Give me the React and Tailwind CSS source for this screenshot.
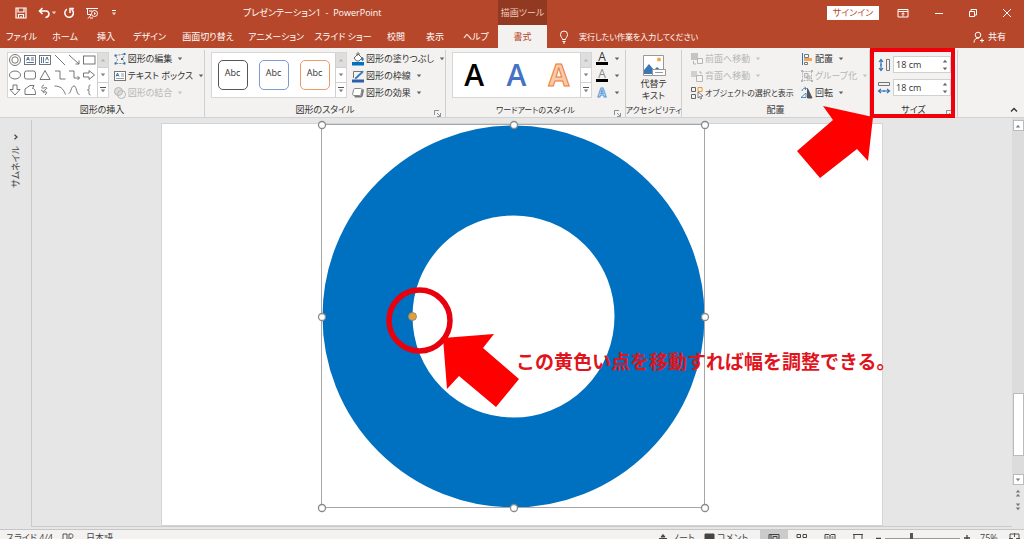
import clsx from 'clsx';

const tabs = [
  { label: 'ファイル', width: 'w-[43px]' },
  { label: 'ホーム', width: 'w-[44px]' },
  { label: '挿入', width: 'w-[38px]' },
  { label: 'デザイン', width: 'w-[49px]' },
  { label: '画面切り替え', width: 'w-[68px]' },
  { label: 'アニメーション', width: 'w-[68px]' },
  { label: 'スライド ショー', width: 'w-[66px]' },
  { label: '校閲', width: 'w-[40px]' },
  { label: '表示', width: 'w-[38px]' },
  { label: 'ヘルプ', width: 'w-[44px]' },
];

// outlines for the shape gallery, drawn on a 14x12 grid
const shapes = [
  ['リング', <><circle cx="7" cy="6" r="5.5" /><circle cx="7" cy="6" r="3.2" /></>],
  ['横書きテキスト', <><rect x="1.5" y="1.5" width="11" height="9" /><path d="M3.5 6.5 5 3l1.500 3.500M4 5.500h2M8 4h3M8 6h3M3.500 8.500h7.500" stroke="#44678f" /></>],
  ['縦書きテキスト', <><rect x="1.500" y="1.500" width="11" height="9" /><path d="M7.500 6.500 9 3l1.500 3.500M3.500 3v6M5.500 3v6M7.500 8.500h3" stroke="#44678f" /></>],
  ['直線', <path d="M2 1l10 10" />],
  ['矢印', <path d="M2 1l10 9M12 6.500v3.500H8.500" />],
  ['正方形', <rect x="1.500" y="2" width="11.500" height="8" />],
  ['楕円', <ellipse cx="7" cy="6" rx="5.500" ry="4" />],
  ['角丸四角形', <rect x="1.500" y="2" width="11" height="8" rx="2" />],
  ['三角形', <path d="M7 1.500 12 10.500H2z" />],
  ['カギ線', <path d="M2 2h5v8h5.500" />],
  ['カギ線矢印', <path d="M2 2h5v7h5.500M10.500 7l2 2-2 2" />],
  ['右矢印', <path d="M1.500 4h5.500V1.500L12.500 6 7 10.500V8H1.500z" />],
  ['下矢印', <path d="M5 1h4v4.500h3L7 11 2 5.500h3z" />],
  ['フリーフォーム', <path d="M2 10.500V5l5-3.500h4L9.500 4.500c2 0 3 1.500 3 6z" />],
  ['フリーハンド', <path d="M6 1C3 2 3 5 6 4s4 0 1 2-2 3 0 2 2 1 0 3M3 6l3 2" />],
  ['円弧', <path d="M1.500 2c6 0 9 3 11 8.500" />],
  ['曲線', <path d="M1.500 9.500C4 9.500 4 2 7 2s2 8.500 5.500 8.500" />],
  ['左中かっこ', <path d="M8.500 1C6.500 1 7 3 7 4.500S6 6 5.500 6C6 6 7 6 7 7.500s-.5 3.500 1.500 3.500" />],
];

const Caret = ({ className }) => (
  <svg viewBox="0 0 6 4" className={clsx('h-1 w-1.5 shrink-0 fill-current opacity-75', className)} aria-hidden="true">
    <path d="M.8.5h4.400L3 3.300z" />
  </svg>
);

const Svg = ({ w = 14, h = 14, className, children }) => (
  <svg
    viewBox={`0 0 ${w} ${h}`}
    width={w}
    height={h}
    fill="none"
    stroke="currentColor"
    className={clsx('shrink-0', className)}
    aria-hidden="true"
  >
    {children}
  </svg>
);

const GalleryScroll = () => (
  <div className="flex w-[11px] shrink-0 flex-col divide-y divide-[#d0d0d0] border-l border-[#d0d0d0] text-[#555]">
    <button aria-label="前の行" className="flex flex-1 items-center justify-center bg-[#dedede] text-[#aaa]">
      <Caret className="rotate-180" />
    </button>
    <button aria-label="次の行" className="flex flex-1 items-center justify-center"><Caret /></button>
    <button aria-label="その他" className="flex flex-1 flex-col items-center justify-center gap-px">
      <span className="h-px w-1.5 bg-current" />
      <Caret />
    </button>
  </div>
);

const Gallery = ({ className, children }) => (
  <div className={clsx('flex h-[46px] border border-[#d6d6d6] bg-white', className)}>
    {children}
    <GalleryScroll />
  </div>
);

const Group = ({ label, width, launcher, small, children }) => (
  <section className={clsx('relative flex shrink-0 flex-col border-r border-[#cfcfcf]', width)} aria-label={label}>
    <div className="flex h-[53px] items-start">{children}</div>
    <div className={clsx('flex h-[14px] items-center justify-center whitespace-nowrap', small && 'text-[8px]')}>
      {label}
    </div>
    {launcher && (
      <button aria-label={`${label}の詳細`} className="absolute bottom-0 right-1 text-[#777]">
        <Svg w={7} h={7}><path d="M.5 5V.5H5M3 3l3 3M6.500 3v3.500H3" strokeWidth=".8" /></Svg>
      </button>
    )}
  </section>
);

const Command = ({ icon, label, caret = true, small, disabled }) => (
  <button
    disabled={disabled}
    className={clsx(
      'flex h-[17px] items-center gap-px whitespace-nowrap',
      disabled && 'text-[#b5b5b5]',
      small && 'text-[8px]'
    )}
  >
    {icon}
    {label}
    {caret && <Caret className="ml-1" />}
  </button>
);

const EditShapeIcon = () => (
  <Svg>
    <path d="M2.500 3.500 12 2 9.500 7l2.500 4.500H2.500L4.500 8z" stroke="#888" strokeDasharray="2 1" />
    <path d="M1.500 2.500h2v2h-2zM10.500 1h2v2h-2zM1.500 10.500h2v2h-2zM10.500 10.500h2v2h-2zM8 6h2v2H8z" fill="#2f75b5" stroke="none" />
  </Svg>
);

const TextBoxIcon = () => (
  <Svg>
    <rect x="1.500" y="2.500" width="11" height="9" fill="#fff" stroke="#777" />
    <path d="M3 7.500 4.500 4 6 7.500M3.500 6.500h2" stroke="#2f75b5" />
    <path d="M8 5h3M8 7h3M3 9.500h8" stroke="#999" />
  </Svg>
);

const MergeIcon = () => (
  <Svg>
    <circle cx="5.500" cy="5.500" r="4" fill="#ddd" />
    <circle cx="8.500" cy="8.500" r="4" />
  </Svg>
);

const FillIcon = () => (
  <Svg>
    <path d="M3 6l4-4 4 4-3 3H5.500z" fill="#fff" stroke="#666" />
    <path d="M6 4V1.500c0-1 2-1 2 0V3" stroke="#666" />
    <path d="M11.500 5.500c1 1.500 1 3 0 3s-1-1.500 0-3z" fill="#2f75b5" stroke="#2f75b5" />
    <path d="M1 10h12v3.500H1z" fill="#0070c0" stroke="none" />
  </Svg>
);

const OutlineIcon = () => (
  <Svg>
    <path d="M2.500 9V2.500H11" stroke="#777" />
    <path d="M4.500 8.500 11.500 2l1 1-7 6.500-1.500.2z" fill="#2f75b5" stroke="#2f75b5" strokeWidth=".6" />
    <path d="M1 10.500h12v3H1z" fill="#2f5da8" stroke="none" />
  </Svg>
);

const EffectIcon = () => (
  <Svg>
    <path d="M4 11.500h5.500c1 0 2-1 2.300-2l1-4.500c.2-1-.3-2-1.300-2.200L10 9.500H3z" fill="#777" stroke="none" />
    <path d="M4 2.500h5.500c1 0 1.500.6 1.300 1.500L10 8c-.2.800-.8 1.500-1.800 1.500H3c-1 0-1.500-.7-1.300-1.500L2.500 4c.2-.9.700-1.500 1.500-1.500z" fill="#fff" stroke="#888" />
  </Svg>
);

const ForwardIcon = () => (
  <Svg>
    <path d="M1 1h7v7H1z" fill="#c4c4c4" stroke="none" />
    <path d="M7.500 6.500h5v5h-5z" fill="#f5f5f5" />
    <path d="M3.500 9v3H6" />
  </Svg>
);

const BackwardIcon = () => (
  <Svg>
    <path d="M1 2h6v6H1z" fill="#d0d0d0" stroke="none" />
    <path d="M6.500 6.500h6v6h-6zM9 3h2v2" fill="#f5f5f5" />
  </Svg>
);

const SelectionPaneIcon = () => (
  <Svg>
    <path d="M1.500 1.500h4v4h-4zM1.500 8.500h4v4h-4z" stroke="#666" />
    <path d="M8 1.500h4v4H8z" stroke="#e59a3c" />
    <path d="M8 6v6l1.500-1.500 1 2.500 1.200-.5-1-2.500H13z" fill="#fff" stroke="#666" strokeWidth=".8" />
  </Svg>
);

const AlignIcon = () => (
  <Svg>
    <path d="M2.500 1v12" stroke="#2f75b5" />
    <path d="M4.500 2.500h4v3h-4z" fill="#fff" stroke="#777" />
    <path d="M4 6h8v3H4z" fill="#f0a656" stroke="none" />
    <path d="M4.500 10.500h3v2h-3z" fill="#fff" stroke="#777" />
  </Svg>
);

const GroupIcon = () => (
  <Svg>
    <path d="M2.500 2.500h9v9h-9z" strokeDasharray="2 1" />
    <path d="M4.500 4.500H8v4H4.500zM7 7h3v3H7z" fill="#e4e4e4" />
    <path d="M1 1h2v2H1zM11 1h2v2h-2zM1 11h2v2H1zM11 11h2v2h-2z" fill="currentColor" stroke="none" />
  </Svg>
);

const RotateIcon = () => (
  <Svg>
    <path d="M7.500 2.500v9.500H12z" fill="#555" stroke="#555" />
    <path d="M1 11.500h5V7z" stroke="#2f75b5" strokeWidth=".8" />
    <path d="M2 5c0-2 2-3 4-2.500M4.500 1 6.500 2.500 5 4" stroke="#2f75b5" strokeWidth=".9" />
  </Svg>
);

const SizeField = ({ id, label, icon }) => (
  <div className="flex items-center gap-0.5">
    <label htmlFor={id} aria-label={label}>{icon}</label>
    <div className="flex h-[17px] w-[58px] items-center border border-[#d0d0d0] bg-white">
      <input id={id} defaultValue="18 cm" className="w-0 flex-1 pl-0.5 text-[9px] outline-none" />
      <div className="flex flex-col gap-1 pr-0.5">
        <button aria-label={`${label}を増やす`}><Caret className="block rotate-180" /></button>
        <button aria-label={`${label}を減らす`}><Caret className="block" /></button>
      </div>
    </div>
  </div>
);

const TitleBar = () => (
  <header className="flex h-[25px] shrink-0 items-center">
    <div className="flex w-[498px] shrink-0 items-center pl-[15px]">
      <button aria-label="上書き保存" className="mr-[10px]">
        <Svg w={12} h={12}><path d="M1 1h10v10H1zM3 1v4h6V1M3.500 11V7.500h5V11M6 9v2" strokeWidth="1.200" /></Svg>
      </button>
      <button aria-label="元に戻す" className="flex items-center">
        <Svg w={14} h={12}><path d="M5.500 1 2.500 4l3 3M3 4h6c4 0 4 6-.5 6.500" strokeWidth="1.600" /></Svg>
      </button>
      <Caret className="mr-[6px]" />
      <button aria-label="繰り返し" className="mr-[10px]">
        <Svg w={12} h={12}><path d="M4 2.200a4.300 4.300 0 1 0 4.500.2M7 6V1.500h4" strokeWidth="1.500" /></Svg>
      </button>
      <button aria-label="先頭から開始" className="mr-[12px]">
        <Svg w={14} h={12}>
          <path d="M1 1.500h12M2.500 2v5.500H6M4 4h3M6 8l-3 3.500M5 11h3" />
          <circle cx="9.500" cy="6.500" r="3" />
          <path d="M9 5l2 1.500L9 8z" fill="currentColor" stroke="none" />
        </Svg>
      </button>
      <button aria-label="クイック アクセスのカスタマイズ" className="flex flex-col items-center gap-px">
        <span className="h-px w-1 bg-current" />
        <Caret />
      </button>
      <h1 className="flex-1 whitespace-nowrap pl-[126px]">プレゼンテーション1 &nbsp;- &nbsp;PowerPoint</h1>
    </div>
    <div className="flex h-full w-[49px] shrink-0 items-center justify-center whitespace-nowrap bg-[#923922] text-[#f1c9bd]">
      描画ツール
    </div>
    <div className="ml-auto flex items-center pr-3">
      <button className="mr-[18px] h-[14px] w-[52px] bg-white text-[#b7472a]">サインイン</button>
      <button aria-label="リボンの表示オプション" className="mr-[25px]">
        <Svg w={12} h={10}><path d="M1 1.500h10v7.500H1zM1 3.500h10M6 8.500V5M4.500 6 6 4.800 7.500 6" /></Svg>
      </button>
      <button aria-label="最小化" className="mr-[24px]"><Svg w={10} h={10}><path d="M1 5.500h8" /></Svg></button>
      <button aria-label="元に戻す (縮小)" className="mr-[24px]">
        <Svg w={10} h={10}><path d="M1.500 3.500h5v5h-5zM3 3V1.500h5.500V7H7" /></Svg>
      </button>
      <button aria-label="閉じる"><Svg w={10} h={10}><path d="M1 1l8 8M9 1 1 9" /></Svg></button>
    </div>
  </header>
);

const TabBar = () => (
  <nav className="flex h-[23px] shrink-0 items-stretch whitespace-nowrap">
    {tabs.map((tab) => (
      <button key={tab.label} className={clsx('flex shrink-0 items-center justify-center', tab.width)}>
        {tab.label}
      </button>
    ))}
    <button className="w-[49px] shrink-0 bg-[#f3f2f1] text-[#b7472a]">書式</button>
    <button className="flex items-center gap-2.5 pl-3 text-[8px]">
      <Svg w={10} h={14}>
        <path d="M3.500 9.500C3.500 8 1.500 7 1.500 4.500a3.500 3.500 0 0 1 7 0c0 2.500-2 3.500-2 5zM3.500 11.500h3M4 13h2" />
      </Svg>
      実行したい作業を入力してください
    </button>
    <button className="ml-auto flex items-center gap-1 pr-[18px]">
      <Svg w={11} h={12}>
        <circle cx="5" cy="4" r="2.800" />
        <path d="M1 11.500c0-3 2-4.500 5-4.500M7 9.500h4M9 7.500v4" />
      </Svg>
      共有
    </button>
  </nav>
);

const styleBoxes = ['border-[#555]', 'border-[#7b9bd3]', 'border-[#ee9a68]'];

const Ribbon = () => (
  <div className="flex h-[70px] shrink-0 border-b border-[#d2d2d2] bg-[#f3f2f1] pt-0.5 text-[#333]">
    <Group label="図形の挿入" width="w-[205px]">
      <Gallery className="ml-[7px] mt-0.5 w-[102px]">
        <div className="grid flex-1 grid-cols-6 items-center justify-items-center">
          {shapes.map(([name, outline]) => (
            <button key={name} aria-label={name} className="text-[#666]">
              <Svg w={14} h={12}><g strokeWidth=".9">{outline}</g></Svg>
            </button>
          ))}
        </div>
      </Gallery>
      <div className="ml-1">
        <Command icon={<EditShapeIcon />} label="図形の編集" />
        <Command icon={<TextBoxIcon />} label="テキスト ボックス" />
        <Command icon={<MergeIcon />} label="図形の結合" disabled />
      </div>
    </Group>

    <Group label="図形のスタイル" width="w-[241px]" launcher>
      <Gallery className="ml-1.5 mt-0.5 w-[139px]">
        <div className="grid flex-1 grid-cols-3 items-center justify-items-center">
          {styleBoxes.map((border) => (
            <button key={border} className={clsx('size-[30px] rounded-[5px] border-[1.5px] pb-1 text-[9px]', border)}>
              Abc
            </button>
          ))}
        </div>
      </Gallery>
      <div className="ml-1">
        <Command icon={<FillIcon />} label="図形の塗りつぶし" />
        <Command icon={<OutlineIcon />} label="図形の枠線" />
        <Command icon={<EffectIcon />} label="図形の効果" />
      </div>
    </Group>

    <Group label="ワードアートのスタイル" width="w-[180px]" launcher small>
      <Gallery className="ml-1.5 mt-0.5 w-[140px]">
        <div className="grid flex-1 grid-cols-3 place-items-center font-['Open_Sans'] text-[30px] leading-none">
          <button className="font-semibold text-black">A</button>
          <button className="font-semibold text-[#4472c4]">A</button>
          <button className="font-bold text-[#f8cbad] [-webkit-text-stroke:1px_#ed7d31]">A</button>
        </div>
      </Gallery>
      <div className="ml-1 text-[12px] leading-none">
        <button aria-label="文字の塗りつぶし" className="flex h-[17px] items-center gap-1.5">
          <span className="w-3 border-b-[3px] border-black leading-[10px]">A</span>
          <Caret />
        </button>
        <button aria-label="文字の輪郭" className="flex h-[17px] items-center gap-1.5">
          <span className="w-3 border-b-[3px] border-black leading-[10px] text-[#888]">A</span>
          <Caret />
        </button>
        <button aria-label="文字の効果" className="flex h-[17px] items-center gap-1.5">
          <span className="w-3 font-bold text-[#e8f1fb] [-webkit-text-stroke:1px_#5b9bd5]">A</span>
          <Caret />
        </button>
      </div>
    </Group>

    <Group label="アクセシビリティ" width="w-[56px]" small>
      <button className="flex w-full flex-col items-center pt-1 leading-[12px]">
        <Svg w={24} h={24}>
          <path d="M1.500 1.500h20v20h-20z" fill="#fff" stroke="#999" />
          <circle cx="17" cy="5.500" r="2" fill="#eda84d" stroke="none" />
          <path d="M2 20v-4l5-6 5 6 3-3 6 5v2z" fill="#3c76b5" stroke="none" />
          <path d="M10.500 15.500h13v6h-13z" fill="#fff" stroke="#999" />
          <path d="M13 18.500h8" stroke="#999" />
        </Svg>
        代替テ<br />キスト
      </button>
    </Group>

    <Group label="配置" width="w-[188px]">
      <div className="ml-2 w-[110px]">
        <Command icon={<ForwardIcon />} label="前面へ移動" disabled />
        <Command icon={<BackwardIcon />} label="背面へ移動" disabled />
        <Command icon={<SelectionPaneIcon />} label="オブジェクトの選択と表示" caret={false} small />
      </div>
      <div>
        <Command icon={<AlignIcon />} label="配置" />
        <Command icon={<GroupIcon />} label="グループ化" disabled />
        <Command icon={<RotateIcon />} label="回転" />
      </div>
    </Group>

    <Group label="サイズ" width="w-[88px]" launcher>
      <div className="ml-[7px] mt-1.5 flex flex-col gap-1.5">
        <SizeField
          id="shape-height"
          label="高さ"
          icon={(
            <Svg>
              <path d="M9.500 1.500h3v11h-3z" stroke="#777" />
              <path d="M4 2v10M2 4l2-2.500L6 4M2 10l2 2.500L6 10M3 7h2" stroke="#2f75b5" strokeWidth="1.200" />
            </Svg>
          )}
        />
        <SizeField
          id="shape-width"
          label="幅"
          icon={(
            <Svg>
              <path d="M1.500 1.500h11v3h-11z" stroke="#777" />
              <path d="M2 10h10M4 8l-2.500 2L4 12M10 8l2.500 2-2.500 2M7 9v2" stroke="#2f75b5" strokeWidth="1.200" />
            </Svg>
          )}
        />
      </div>
      {/* callout frame and arrow over the size group */}
      <div className="pointer-events-none absolute -bottom-px -top-0.5 left-0 right-0.5 z-10 border-4 border-[#f1000c]" />
      <svg viewBox="0 0 76 72" className="pointer-events-none absolute -left-[73px] top-14 z-10 h-[72px] w-[76px] fill-[#fe0000]">
        <path d="M0 45 23 72 60 43 71 55 76 11 26 0 36 14z" />
      </svg>
    </Group>

    <div className="flex flex-1 items-end justify-end pb-1 pr-1.5">
      <button aria-label="リボンを折りたたむ"><Svg w={8} h={6} className="block"><path d="M1 4.500 4 1.500l3 3" strokeWidth="1.300" /></Svg></button>
    </div>
  </div>
);

const handles = [
  [160, 1], [352, 1], [543, 1],
  [160, 193], [543, 193],
  [160, 384], [352, 384], [543, 384],
];

const Slide = () => (
  <div className="relative h-[401px] w-[720px] shrink-0 bg-white shadow-[0_0_0_1px_#d4d4d4]">
    <svg viewBox="0 0 720 401" className="absolute inset-0 size-full overflow-visible" aria-hidden="true">
      <circle cx="351.500" cy="192.500" r="146" fill="none" stroke="#0070c0" strokeWidth="90" />
      <rect x="159.500" y=".5" width="383" height="383" fill="none" stroke="#a6a6a6" />
      {handles.map(([x, y]) => (
        <circle key={`${x}-${y}`} cx={x} cy={y} r="3.500" fill="#fff" stroke="#8a8a8a" strokeWidth="1.300" />
      ))}
      <circle cx="250.500" cy="192.500" r="4" fill="#e0a040" stroke="#8f7f60" strokeWidth=".8" />
      <circle cx="257.500" cy="196.500" r="30.500" fill="none" stroke="#e8000e" strokeWidth="5.500" />
      <path d="M281 214 332 210 321 224 357 255 334 283 297 252 285 265z" fill="#fe0000" />
    </svg>
    <p className="absolute left-[354px] top-[224px] whitespace-nowrap text-[19px] font-bold leading-7 text-[#e0141c] [font-feature-settings:normal]">
      この黄色い点を移動すれば幅を調整できる。
    </p>
  </div>
);

const ScrollBar = () => (
  <div className="flex w-3 shrink-0 flex-col items-center bg-[#dcdcdc] pt-0.5 text-[#555]">
    <button aria-label="上へスクロール" className="flex h-[11px] w-[11px] items-center justify-center border border-[#bbb] bg-white">
      <Caret className="rotate-180" />
    </button>
    <div className="flex-1" />
    <div className="h-[63px] w-[11px] border border-[#bbb] bg-white" />
    <div className="h-[18px]" />
    <button aria-label="下へスクロール" className="flex h-[11px] w-[11px] items-center justify-center border border-[#bbb] bg-white">
      <Caret />
    </button>
    <div className="flex h-[44px] w-full flex-col items-center gap-1.5 bg-[#e6e6e6] pt-1">
      <button aria-label="前のスライド"><Caret className="block rotate-180" /><Caret className="block rotate-180" /></button>
      <button aria-label="次のスライド"><Caret className="block" /><Caret className="block" /></button>
    </div>
  </div>
);

const Workspace = () => (
  <main className="flex min-h-0 flex-1 bg-[#e6e6e6] text-[#444]">
    <aside className="mb-0.5 mt-0.5 flex w-8 shrink-0 flex-col items-center border-r border-[#cacaca] pt-3.5">
      <button aria-label="サムネイルを展開"><Svg w={6} h={6}><path d="M1.500.8 4 3 1.500 5.200" strokeWidth="1.200" /></Svg></button>
      <div className="mt-1.5 rotate-180 text-[9px] leading-4 [writing-mode:vertical-rl]">
        <span className="[text-orientation:sideways]">サムネイル</span>
      </div>
    </aside>
    <div className="mb-0.5 flex min-w-0 flex-1 justify-center overflow-hidden border-b border-[#cacaca] pt-1.5">
      <Slide />
    </div>
    <ScrollBar />
  </main>
);

const StatusBar = () => (
  <footer className="h-[10px] shrink-0 overflow-hidden border-t border-[#c6c6c6] bg-[#f3f2f1] text-[#444]">
    <div className="flex h-4 items-center whitespace-nowrap pl-1.5 pr-1">
      <span className="w-14">スライド 4/4</span>
      <Svg w={12} h={11} className="mr-3"><path d="M1 10V1h4v9M7 10V1h2.500c2 0 2 4 0 4H8l3 5" strokeWidth=".9" /></Svg>
      <span>日本語</span>
      <button className="ml-auto flex w-[46px] items-center gap-1">
        <Svg w={10} h={10}><path d="M3 4 5 1.500 7 4zM1 5.500h8M2 8h6" fill="currentColor" /></Svg>
        ノート
      </button>
      <button className="flex w-[56px] items-center gap-0.5">
        <Svg w={11} h={10}><path d="M1 1h9v6H5L3 9V7H1z" fill="currentColor" /></Svg>
        コメント
      </button>
      <button aria-label="標準" className="flex h-4 w-7 items-center justify-center bg-[#cbcbcb]">
        <Svg w={12} h={11}><path d="M1 1.500h10v8H1zM3 1.500v8M5 3.500h4v3H5zM3 8h8" /></Svg>
      </button>
      <button aria-label="スライド一覧" className="flex w-7 justify-center">
        <Svg w={12} h={11}><path d="M1 1.500h3.500v3H1zM7 1.500h3.500v3H7zM1 7h3.500v3H1zM7 7h3.500v3H7z" /></Svg>
      </button>
      <button aria-label="閲覧表示" className="flex w-7 justify-center">
        <Svg w={12} h={11}><path d="M1 1.500h4l1 1 1-1h4v8H1zM6 2v8M2.500 4h2M2.500 6h2M7.500 4h2M7.500 6h2" /></Svg>
      </button>
      <button aria-label="スライド ショー" className="flex w-7 justify-center">
        <Svg w={12} h={11}><path d="M1 1.500h10M2 2v5h8V2M6 7v3M4 10h4" /></Svg>
      </button>
      <button aria-label="縮小" className="px-1"><Svg w={5} h={5}><path d="M0 2.500h5" strokeWidth="1.500" /></Svg></button>
      <input
        type="range"
        min="10"
        max="200"
        defaultValue="76"
        aria-label="ズーム"
        className="h-3 w-[75px] appearance-none bg-[linear-gradient(#999,#999)] bg-[length:100%_1px] bg-center bg-no-repeat [&::-webkit-slider-thumb]:h-2.5 [&::-webkit-slider-thumb]:w-[3px] [&::-webkit-slider-thumb]:appearance-none [&::-webkit-slider-thumb]:bg-[#555]"
      />
      <button aria-label="拡大" className="px-1"><Svg w={6} h={6}><path d="M0 3h6M3 0v6" strokeWidth="1.300" /></Svg></button>
      <span className="w-[35px] pl-1.5">75%</span>
      <button aria-label="ウィンドウに合わせる">
        <Svg w={11} h={11}><path d="M1 1h9v9H1zM5.500 0v4M5.500 7v4M0 5.500h4M7 5.500h4" strokeWidth=".9" /></Svg>
      </button>
    </div>
  </footer>
);

const App = () => (
  <div
    lang="ja"
    className="flex h-screen flex-col overflow-hidden bg-[#b7472a] font-['Open_Sans','Noto_Sans_CJK_JP',sans-serif] text-[9px] leading-3 text-white [font-feature-settings:'palt']"
  >
    <TitleBar />
    <TabBar />
    <Ribbon />
    <Workspace />
    <StatusBar />
  </div>
);

export default App;
